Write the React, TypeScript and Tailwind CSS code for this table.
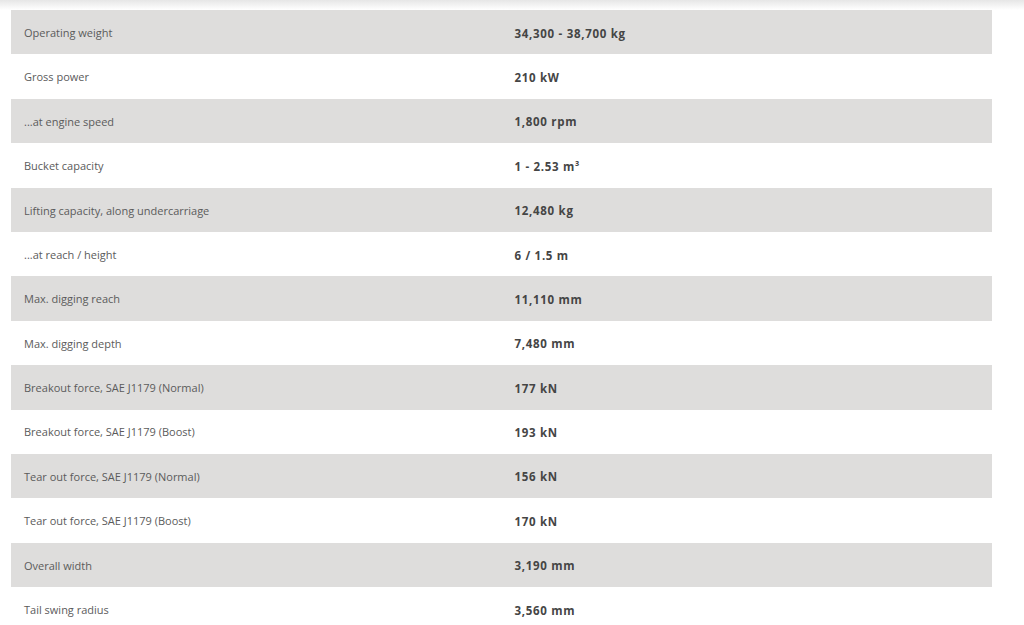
const specs = [
  ["Operating weight", "34,300 - 38,700 kg"],
  ["Gross power", "210 kW"],
  ["...at engine speed", "1,800 rpm"],
  ["Bucket capacity", "1 - 2.53 m³"],
  ["Lifting capacity, along undercarriage", "12,480 kg"],
  ["...at reach / height", "6 / 1.5 m"],
  ["Max. digging reach", "11,110 mm"],
  ["Max. digging depth", "7,480 mm"],
  ["Breakout force, SAE J1179 (Normal)", "177 kN"],
  ["Breakout force, SAE J1179 (Boost)", "193 kN"],
  ["Tear out force, SAE J1179 (Normal)", "156 kN"],
  ["Tear out force, SAE J1179 (Boost)", "170 kN"],
  ["Overall width", "3,190 mm"],
  ["Tail swing radius", "3,560 mm"],
];

export default function App() {
  return (
    <div className="min-h-screen bg-white font-['Open_Sans',sans-serif]">
      <div className="h-[10px] bg-gradient-to-b from-[#e6e6e6] to-white" />
      <div className="ml-[11px] w-[981px]">
        {specs.map(([label, value], i) => (
          <div
            key={label}
            className={
              "grid h-[44.4px] grid-cols-2 items-center pt-[2px] text-[11px] " +
              (i % 2 === 0 ? "bg-[#dedddc]" : "bg-white")
            }
          >
            <div className="pl-[13px] text-[#5b5b5b]">{label}</div>
            <div className="pl-[13px] text-[11.5px] font-bold tracking-[0.7px] text-[#454545]">{value}</div>
          </div>
        ))}
      </div>
    </div>
  );
}
